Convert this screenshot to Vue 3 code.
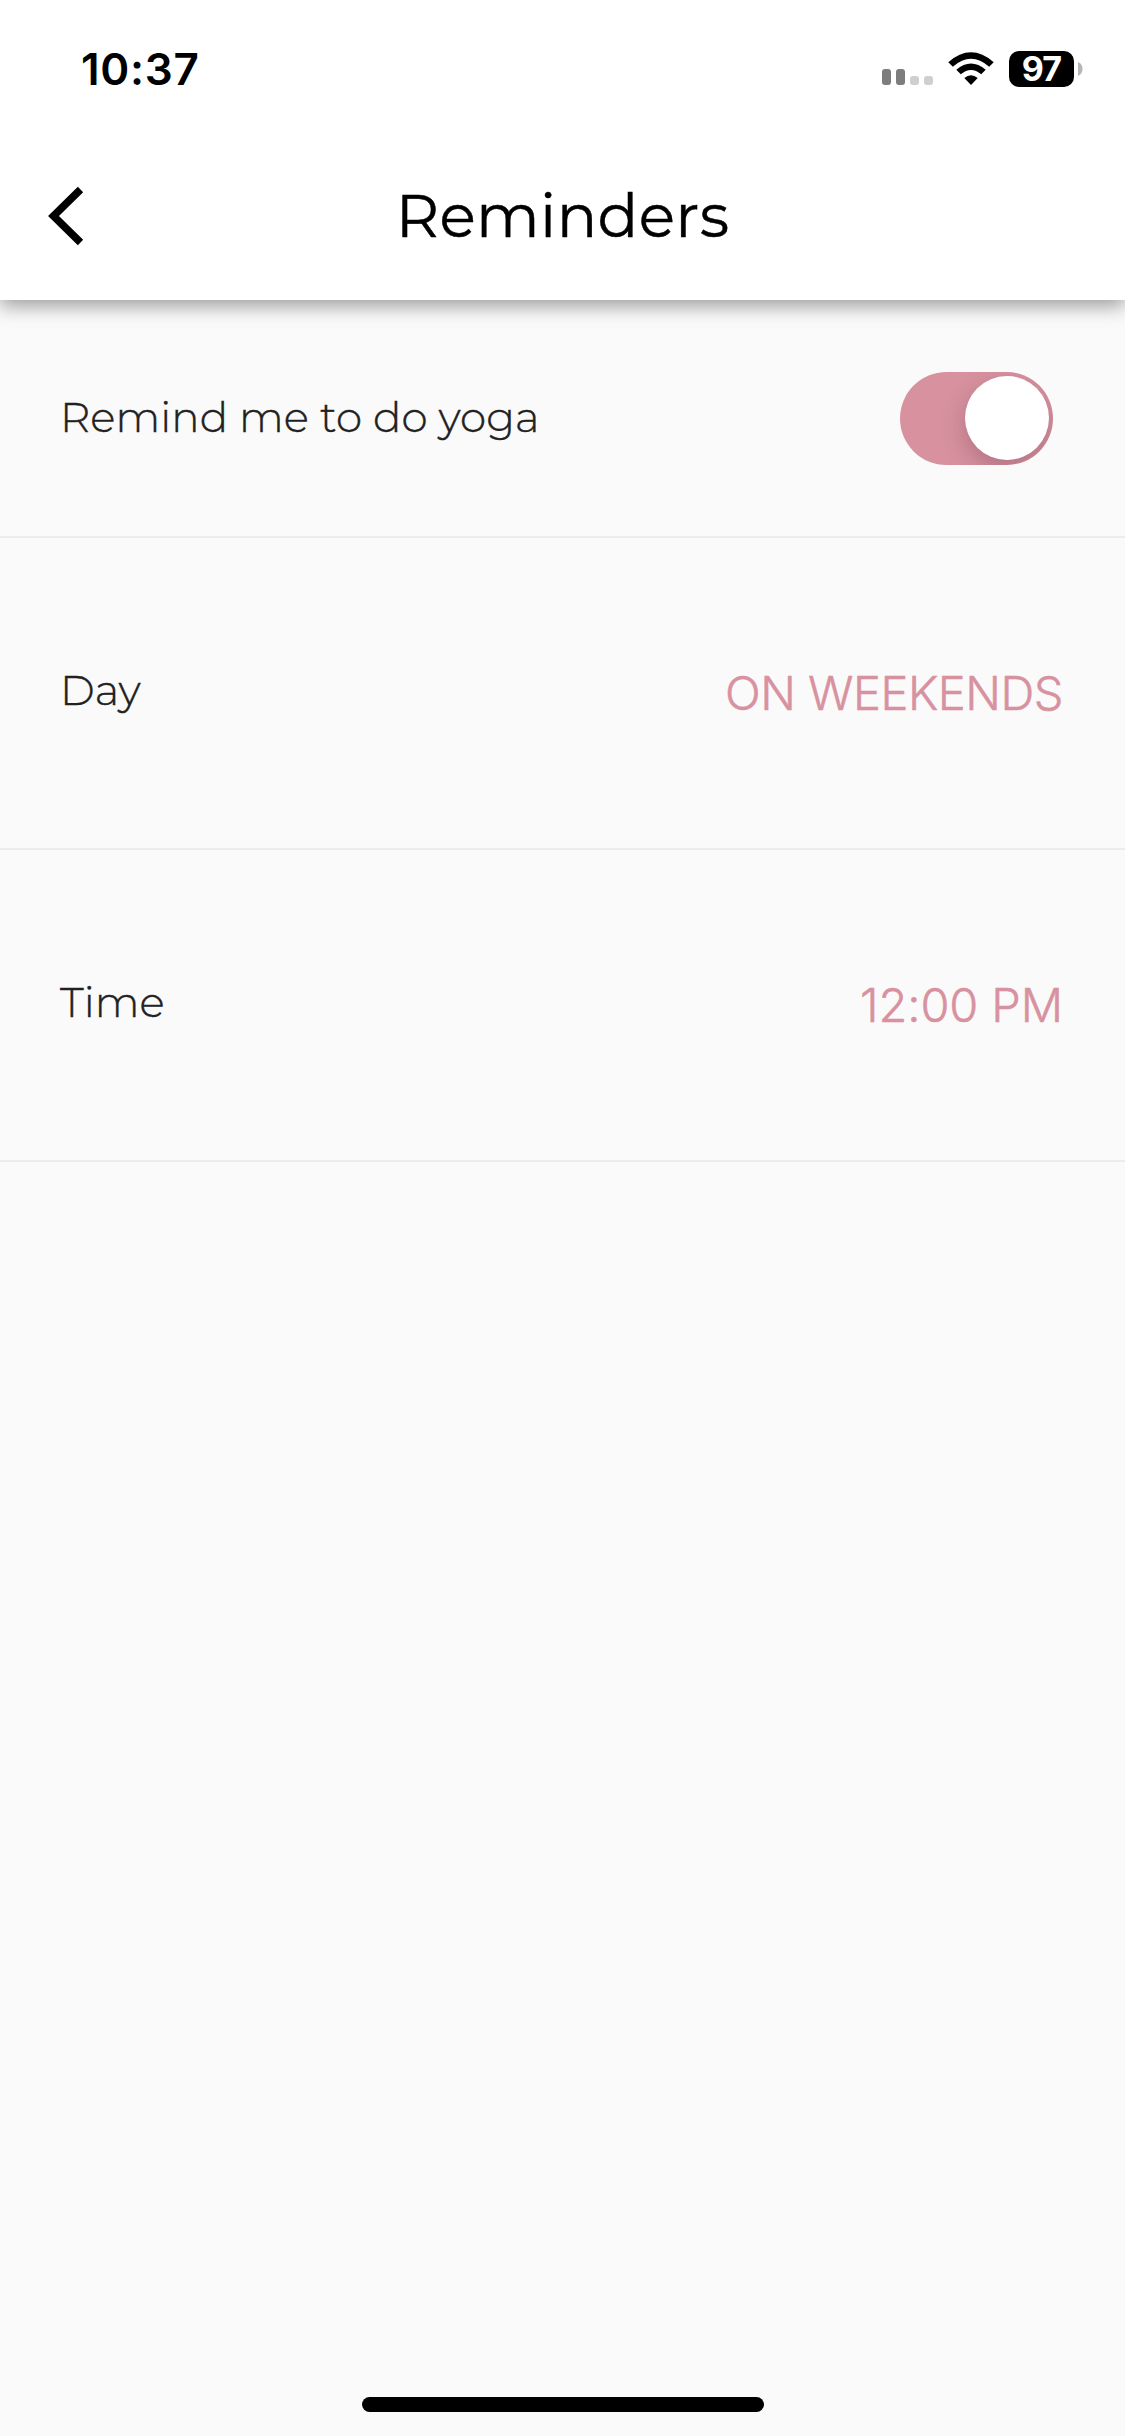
<script setup>
import { ref } from 'vue'

const enabled = ref(true)
const settings = [
  { id: 'day', label: 'Day', value: 'ON WEEKENDS' },
  { id: 'time', label: 'Time', value: '12:00 PM' },
]
</script>

<template>
  <div class="screen">
    <header class="header">
      <div class="status">
        <span class="clock">10:37</span>
        <div class="indicators">
          <svg class="signal" width="52" height="17" viewBox="0 0 52 17">
            <rect x="0" y="0" width="9" height="16" rx="3" fill="#7d7d7d" />
            <rect x="14" y="0" width="9" height="16" rx="3" fill="#7d7d7d" />
            <rect x="28" y="7" width="9" height="9" rx="3" fill="#cfcfcf" />
            <rect x="42" y="7" width="9" height="9" rx="3" fill="#cfcfcf" />
          </svg>
          <svg class="wifi" width="46" height="34" viewBox="0 0 46 34">
            <path d="M0.3 10.2Q23 -9.6 45.700 10.200L41.200 14.700Q23 -1.300 4.800 14.700Z" />
            <path d="M8.300 17.800Q23 5.400 37.700 17.800L33.200 22.300Q23 13.700 12.800 22.300Z" />
            <path d="M16.300 26Q23 20.700 29.700 26L23 33Z" />
          </svg>
          <div class="battery"><span class="level">97</span></div>
          <svg class="cap" width="5" height="14" viewBox="0 0 5 14">
            <path d="M0 0Q4.500 2 4.500 7T0 14Z" fill="#b5b5b5" />
          </svg>
        </div>
      </div>
      <div class="navbar">
        <svg class="back" width="36" height="60" viewBox="0 0 36 60">
          <path d="M32.500 3.500L5.500 30L32.500 56.500" fill="none" stroke="#000" stroke-width="7.600" />
        </svg>
        <h1 class="title">Reminders</h1>
      </div>
    </header>

    <main class="list">
      <section class="row first">
        <span class="label remind">Remind me to do yoga</span>
        <button
          class="toggle"
          :class="{ on: enabled }"
          role="switch"
          :aria-checked="enabled"
          @click="enabled = !enabled"
        >
          <span class="knob"></span>
        </button>
      </section>
      <section v-for="item in settings" :key="item.id" class="row" :class="item.id">
        <span class="label">{{ item.label }}</span>
        <span class="value">{{ item.value }}</span>
      </section>
    </main>

    <div class="home"></div>
  </div>
</template>

<style>
body {
  background: #fafafa;
}
</style>

<style scoped>
.screen {
  width: 1125px;
  height: 2436px;
  display: flex;
  flex-direction: column;
  align-items: center;
  background: #fafafa;
  font-family: Montserrat, Inter, sans-serif;
  overflow: hidden;
}
.header {
  width: 100%;
  height: 300px;
  background: #fff;
  box-shadow: 0 6px 18px rgba(0, 0, 0, 0.38);
  flex: none;
}
.status {
  height: 132px;
  display: flex;
  justify-content: space-between;
  font-family: Inter, sans-serif;
}
.clock {
  margin: 43px 0 0 81px;
  font-size: 44px;
  font-weight: 600;
  line-height: 53px;
  letter-spacing: 0.7px;
}
.indicators {
  display: flex;
  align-items: flex-start;
  padding-right: 42px;
}
.signal {
  margin-top: 69px;
}
.wifi {
  margin: 52px 0 0 14px;
}
.battery {
  width: 65px;
  height: 36px;
  margin: 51px 0 0 15px;
  border-radius: 10px;
  background: #000;
  color: #fff;
  text-align: center;
}
.level {
  display: block;
  font-size: 34px;
  font-weight: 700;
  line-height: 36px;
  letter-spacing: -0.8px;
}
.cap {
  margin: 62px 0 0 4px;
}
.navbar {
  height: 168px;
  display: grid;
  grid-template-columns: 120px 1fr 120px;
  align-items: start;
}
.back {
  margin: 54px 0 0 48px;
}
.title {
  margin: 48px 0 0;
  font-size: 60px;
  line-height: 72px;
  font-weight: 400;
  text-align: center;
  letter-spacing: 0.4px;
  white-space: nowrap;
  -webkit-text-stroke: 0.5px currentColor;
}
.list {
  width: 100%;
  flex: 1;
}
.row {
  box-sizing: border-box;
  height: 312px;
  display: flex;
  align-items: center;
  justify-content: space-between;
  padding: 0 62px 0 60px;
  border-bottom: 2px solid #ececec;
}
.row.first {
  height: 238px;
  padding-right: 72px;
}
.label {
  margin-bottom: 6px;
  font-size: 42px;
  line-height: 50px;
  font-weight: 300;
  color: #212121;
  letter-spacing: 0.1px;
  -webkit-text-stroke: 0.4px currentColor;
}
.label.remind {
  margin-bottom: 2px;
}
.value {
  font-family: Inter, sans-serif;
  font-size: 47px;
  line-height: 58px;
  font-weight: 300;
  letter-spacing: -0.5px;
  color: #d8929f;
  -webkit-text-stroke: 0.5px currentColor;
}
.time .value {
  letter-spacing: -0.1px;
}
.toggle {
  box-sizing: border-box;
  width: 153px;
  height: 93px;
  padding: 4px 4px 4px 5px;
  border: 0;
  border-radius: 47px;
  background: #c9c9c9;
  display: flex;
  overflow: hidden;
}
.toggle.on {
  background: #d8929f;
  justify-content: flex-end;
}
.knob {
  width: 84px;
  height: 84px;
  border-radius: 50%;
  background: #fff;
  box-shadow: 0 9px 24px rgba(60, 20, 45, 0.25);
}
.home {
  width: 402px;
  height: 15px;
  margin-bottom: 24px;
  border-radius: 8px;
  background: #000;
}
</style>
